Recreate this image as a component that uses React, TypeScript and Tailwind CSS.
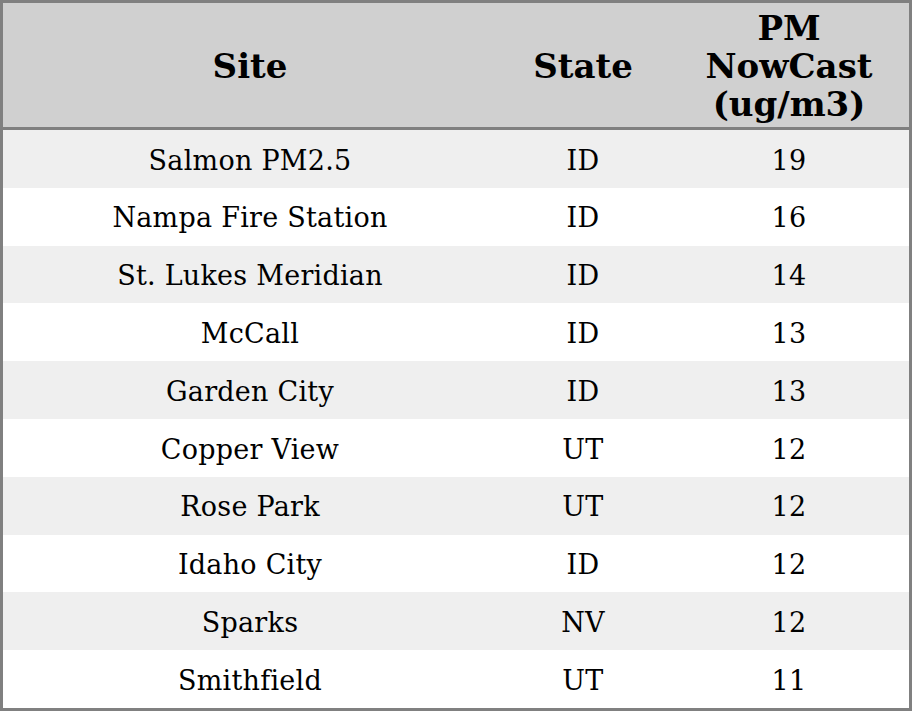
const rows = [
  { site: "Salmon PM2.5", state: "ID", pm: 19 },
  { site: "Nampa Fire Station", state: "ID", pm: 16 },
  { site: "St. Lukes Meridian", state: "ID", pm: 14 },
  { site: "McCall", state: "ID", pm: 13 },
  { site: "Garden City", state: "ID", pm: 13 },
  { site: "Copper View", state: "UT", pm: 12 },
  { site: "Rose Park", state: "UT", pm: 12 },
  { site: "Idaho City", state: "ID", pm: 12 },
  { site: "Sparks", state: "NV", pm: 12 },
  { site: "Smithfield", state: "UT", pm: 11 },
];

export default function App() {
  return (
    <div className="w-[912px] h-[711px] bg-white border-[3px] border-[#808080] flex flex-col text-black font-['DejaVu_Serif',serif]">
      <div className="h-[127px] shrink-0 flex items-center bg-[#d0d0d0] border-b-[3px] border-[#808080] text-[34px] leading-[38px] font-bold pt-[2px]">
        <div className="w-[494px] text-center">Site</div>
        <div className="w-[172px] text-center">State</div>
        <div className="flex-1 text-center">
          PM
          <br />
          NowCast
          <br />
          (ug/m3)
        </div>
      </div>
      <div className="flex-1 flex flex-col">
        {rows.map((r, i) => (
          <div
            key={r.site}
            className={`flex-1 flex items-center pt-[4px] text-[27px] tracking-[0.25px] ${i % 2 === 0 ? "bg-[#efefef]" : "bg-white"}`}
          >
            <div className="w-[494px] text-center">{r.site}</div>
            <div className="w-[172px] text-center">{r.state}</div>
            <div className="flex-1 text-center">{r.pm}</div>
          </div>
        ))}
      </div>
    </div>
  );
}
